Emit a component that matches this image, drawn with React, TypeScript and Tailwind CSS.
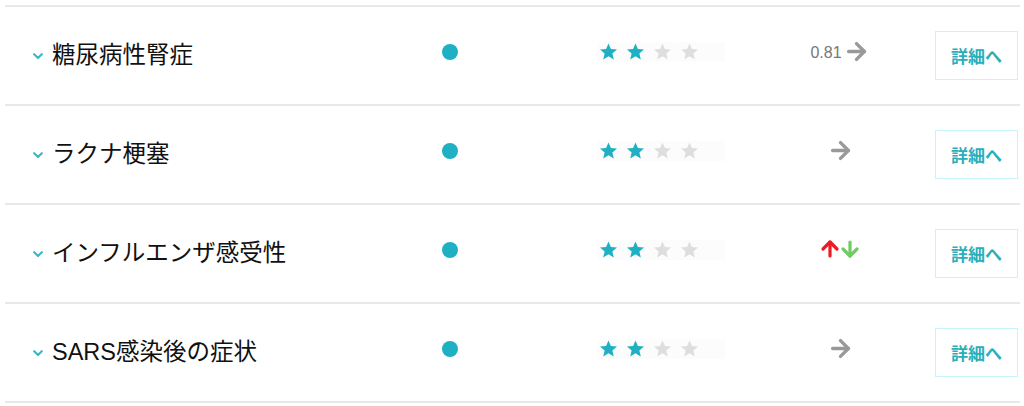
import { ArrowRight, ArrowUp, ArrowDown } from 'lucide-react'

type Trend = { kind: 'flat'; value?: string } | { kind: 'mixed' }

interface Row {
  name: string
  stars: number
  trend: Trend
}

const rows: Row[] = [
  { name: '糖尿病性腎症', stars: 2, trend: { kind: 'flat', value: '0.81' } },
  { name: 'ラクナ梗塞', stars: 2, trend: { kind: 'flat' } },
  { name: 'インフルエンザ感受性', stars: 2, trend: { kind: 'mixed' } },
  { name: 'SARS感染後の症状', stars: 2, trend: { kind: 'flat' } },
]

function Star({ filled }: { filled: boolean }) {
  return (
    <svg viewBox="0 0 24 24" className="h-[19px] w-[19px]">
      <path
        d="M12 1.8l3.05 7.1 7.7.62-5.86 5.03 1.8 7.55L12 18.1l-6.69 4l1.8-7.55L1.25 9.52l7.7-.62z"
        fill={filled ? '#1fb0c3' : '#dedede'}
      />
    </svg>
  )
}

function Chevron() {
  return (
    <svg viewBox="0 0 10 7" className="h-[7px] w-[10px]">
      <polyline points="1.2,1.2 5,5 8.8,1.2" fill="none" stroke="#3db8c6" strokeWidth="2.2" strokeLinecap="round" strokeLinejoin="round" />
    </svg>
  )
}

export default function App() {
  return (
    <div className="h-[406px] w-[1024px] bg-white pt-[5px] pl-[5px] font-['Noto_Sans_CJK_JP',sans-serif]">
      <div className="w-[1015px] border-t-2 border-[#e8e8e8]">
        {rows.map((row) => (
          <div key={row.name} className="flex h-[99px] items-center border-b-2 border-[#e8e8e8]">
            {/* name */}
            <div className="flex w-[437px] items-center gap-[9px] pl-[28px] pt-[1px]">
              <Chevron />
              <span className="font-['Liberation_Sans','Noto_Sans_CJK_JP',sans-serif] text-[23.5px] leading-none text-[#111]">{row.name}</span>
            </div>

            {/* level dot */}
            <div className="flex w-[156px] items-center pb-[8px]">
              <div className="h-[16px] w-[16px] rounded-full bg-[#1fb0c3]" />
            </div>

            {/* rating */}
            <div className="w-[182px] pb-[8px]">
              <div className="flex h-[20px] w-[127px] items-center gap-[8px] bg-[#fcfcfc] pl-[1px]">
                {[0, 1, 2, 3].map((i) => (
                  <Star key={i} filled={i < row.stars} />
                ))}
              </div>
            </div>

            {/* trend */}
            <div className="flex w-[120px] items-center justify-center pb-[9px]">
              {row.trend.kind === 'flat' ? (
                <div className="flex items-center gap-[1px]">
                  {row.trend.value && (
                    <span className="font-['Liberation_Sans',sans-serif] text-[16px] text-[#777] mt-[4px]">{row.trend.value}</span>
                  )}
                  <ArrowRight className="h-[27px] w-[27px] text-[#999]" strokeWidth={3} />
                </div>
              ) : (
                <div className="flex items-center -space-x-[4px]">
                  <ArrowUp className="h-[24px] w-[24px] text-[#ee1b24]" strokeWidth={3.2} />
                  <ArrowDown className="h-[24px] w-[24px] text-[#6fcb62]" strokeWidth={3.2} />
                </div>
              )}
            </div>

            {/* details */}
            <button className="ml-auto mr-[2px] flex h-[49px] w-[83px] items-center justify-center border border-[#c4f5fa] bg-white text-[17px] font-bold text-[#2aaebb]">
              詳細へ
            </button>
          </div>
        ))}
      </div>
    </div>
  )
}
